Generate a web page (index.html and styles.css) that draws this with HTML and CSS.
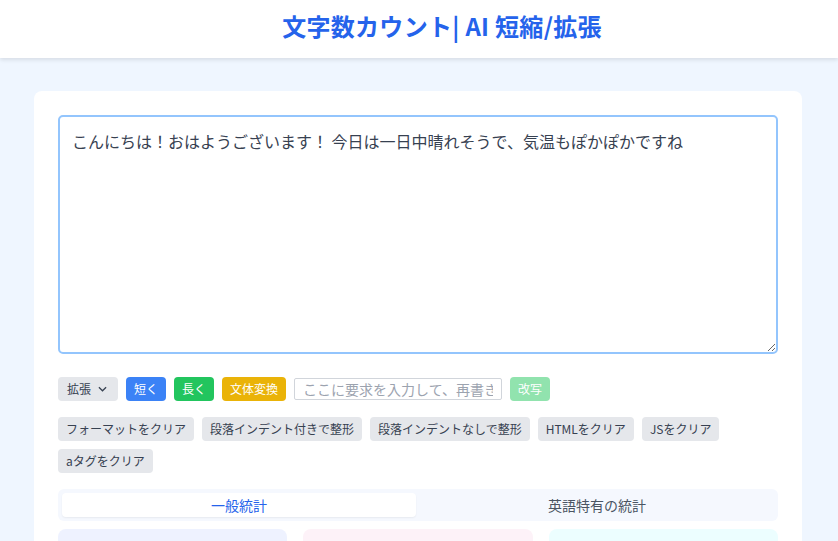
FILE: index.html
```html
<!DOCTYPE html>
<html lang="ja">
<head>
<meta charset="utf-8">
<title>文字数カウント | AI 短縮/拡張</title>
<link rel="stylesheet" href="styles.css">
</head>
<body>
<header class="site-header">
  <h1 class="title">文字数カウント<span class="bar">|</span> AI 短縮/拡張</h1>
</header>
<main class="main">
  <section class="panel">
    <textarea class="editor">こんにちは！おはようございます！ 今日は一日中晴れそうで、気温もぽかぽかですね</textarea>

    <div class="row row-ai">
      <div class="btn btn-gray select">拡張
        <svg class="chev" viewBox="0 0 10 6" width="9" height="6"><path d="M1 1l4 4 4-4" fill="none" stroke="#374151" stroke-width="1.4"/></svg>
      </div>
      <button class="btn btn-blue">短く</button>
      <button class="btn btn-green">長く</button>
      <button class="btn btn-yellow">文体変換</button>
      <input class="req" type="text" placeholder="ここに要求を入力して、再書きしてください">
      <button class="btn btn-disabled">改写</button>
    </div>

    <div class="row row-tools">
      <button class="btn btn-gray">フォーマットをクリア</button>
      <button class="btn btn-gray">段落インデント付きで整形</button>
      <button class="btn btn-gray">段落インデントなしで整形</button>
      <button class="btn btn-gray">HTMLをクリア</button>
      <button class="btn btn-gray">JSをクリア</button>
      <button class="btn btn-gray">aタグをクリア</button>
    </div>

    <div class="tabs">
      <div class="tab active">一般統計</div>
      <div class="tab">英語特有の統計</div>
    </div>

    <div class="stats">
      <div class="stat stat-indigo"><div class="stat-label">文字数</div><div class="stat-value">38</div></div>
      <div class="stat stat-pink"><div class="stat-label">空白を除いた文字数</div><div class="stat-value">37</div></div>
      <div class="stat stat-cyan"><div class="stat-label">改行を除いた文字数</div><div class="stat-value">38</div></div>
    </div>
  </section>
</main>
</body>
</html>
```

FILE: styles.css
```css
* { box-sizing: border-box; }
html, body { margin: 0; padding: 0; }
body {
  background: #eff6ff;
  font-family: "Noto Sans CJK JP", "Noto Sans", sans-serif;
  color: #374151;
}
.site-header {
  height: 58px;
  background: #fff;
  display: flex;
  align-items: center;
  justify-content: center;
  padding: 0 0 6px 46px;
  box-shadow: 0 2px 4px rgba(0,0,0,0.1);
}
.title {
  margin: 0;
  font-size: 24px;
  font-weight: 700;
  color: #2563eb;
  line-height: 30px;
  letter-spacing: 0.3px;
}
.title .bar { font-weight: 700; }
.main { padding: 33px 36px 0 34px; }
.panel {
  width: 768px;
  background: #fff;
  border-radius: 8px;
  padding: 24px;
  min-height: 600px;
}
.editor {
  display: block;
  width: 720px;
  height: 239px;
  border: 2px solid #93c5fd;
  border-radius: 5px;
  padding: 10px 12px;
  font-family: "Noto Sans CJK JP", sans-serif;
  font-size: 16px;
  line-height: 28px;
  color: #374151;
  outline: none;
  resize: vertical;
}
.row { display: flex; flex-wrap: wrap; gap: 8px; align-items: center; }
.row-ai { margin-top: 23px; }
.row-tools { margin-top: 16px; }
.btn {
  border: none;
  font-family: "Noto Sans CJK JP", sans-serif;
  font-size: 12px;
  line-height: 16px;
  padding: 4px 8px;
  border-radius: 4px;
  color: #fff;
  cursor: pointer;
}
.btn-gray { background: #e5e7eb; color: #374151; }
.btn-blue { background: #3b82f6; }
.btn-green { background: #22c55e; }
.btn-yellow { background: #eab308; }
.btn-disabled { background: #91e3ae; }
.select {
  display: flex;
  align-items: center;
  gap: 7px;
  padding: 4px 11px 4px 9px;
}
.chev { display: block; }
.req {
  width: 208px;
  height: 22px;
  border: 1px solid #d1d5db;
  border-radius: 2px;
  padding: 0 8px;
  font-family: "Noto Sans CJK JP", sans-serif;
  font-size: 14px;
  color: #374151;
  outline: none;
}
.req::placeholder { color: #9ca3af; }
.tabs {
  margin-top: 16px;
  display: flex;
  background: #f5f8fe;
  border-radius: 6px;
  padding: 4px;
  gap: 4px;
}
.tab {
  flex: 1;
  text-align: center;
  font-size: 14px;
  line-height: 24px;
  color: #4b5563;
  border-radius: 4px;
}
.tab.active {
  background: #fff;
  color: #2563eb;
  box-shadow: 0 1px 2px rgba(0,0,0,0.06);
}
.stats {
  margin-top: 8px;
  display: grid;
  grid-template-columns: repeat(3, 1fr);
  gap: 16px;
}
.stat {
  border-radius: 8px;
  padding: 8px 16px 12px 28px;
}
.stat-label { font-size: 14px; line-height: 22px; color: #374151; }
.stat-value { font-size: 24px; font-weight: 700; line-height: 32px; }
.stat-indigo { background: #eef2ff; }
.stat-indigo .stat-value { color: #4f46e5; }
.stat-pink { background: #fdf2f8; }
.stat-pink .stat-value { color: #db2777; }
.stat-cyan { background: #ecfeff; }
.stat-cyan .stat-value { color: #0891b2; }
```
